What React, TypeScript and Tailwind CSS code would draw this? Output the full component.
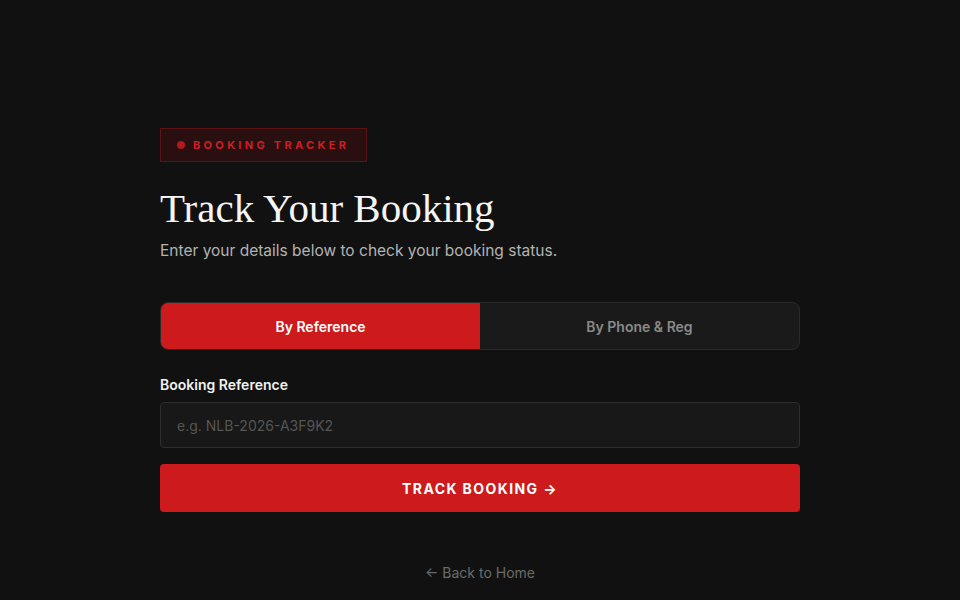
import { useState } from 'react'

export default function App() {
  const [tab, setTab] = useState<'ref' | 'phone'>('ref')

  return (
    <div
      className="min-h-[600px] w-full bg-[#111111] text-white"
      style={{ fontFamily: 'Inter, "Noto Sans", sans-serif' }}
    >
      <div className="mx-auto w-[640px] pt-[128px]">
        {/* badge */}
        <div className="inline-flex h-[34px] items-center gap-[8px] border border-[#5a1416] bg-[#2a0f10] pl-[16px] pr-[17px]">
          <span className="h-[8px] w-[8px] rounded-full bg-[#b3181c]" />
          <span className="text-[11px] font-bold tracking-[0.3em] text-[#cc1f24]">BOOKING TRACKER</span>
        </div>

        <h1
          className="mt-[22px] text-[41px] leading-[48px] text-[#f5f5f5]"
          style={{ fontFamily: '"Liberation Serif", "DejaVu Serif", serif' }}
        >
          Track Your Booking
        </h1>
        <p className="mt-[7px] text-[15.5px] text-[#b3b3b3]">
          Enter your details below to check your booking status.
        </p>

        {/* tabs */}
        <div className="mt-[40px] flex h-[48px] overflow-hidden rounded-[8px] border border-[#2a2a2a] bg-[#1a1a1a]">
          <button
            onClick={() => setTab('ref')}
            className={`flex-1 text-[14px] font-semibold ${tab === 'ref' ? 'bg-[#cc1a1d] text-white' : 'text-[#8a8a8a]'}`}
          >
            By Reference
          </button>
          <button
            onClick={() => setTab('phone')}
            className={`flex-1 text-[14px] font-semibold ${tab === 'phone' ? 'bg-[#cc1a1d] text-white' : 'text-[#8a8a8a]'}`}
          >
            By Phone &amp; Reg
          </button>
        </div>

        <label className="mt-[24px] block text-[14px] font-semibold text-[#f2f2f2]">Booking Reference</label>
        <input
          placeholder="e.g. NLB-2026-A3F9K2"
          className="mt-[7px] h-[46px] w-full rounded-[4px] border border-[#2e2e2e] bg-[#181818] px-[16px] text-[14px] text-white outline-none placeholder:text-[#555555]"
        />

        <button className="mt-[16px] h-[48px] w-full rounded-[4px] bg-[#cc1a1d] text-[14px] font-bold tracking-[0.1em] text-white">
          TRACK BOOKING →
        </button>

        <div className="mt-[48px] text-center">
          <a className="text-[14px] text-[#6b6b6b]">← Back to Home</a>
        </div>
      </div>
    </div>
  )
}
